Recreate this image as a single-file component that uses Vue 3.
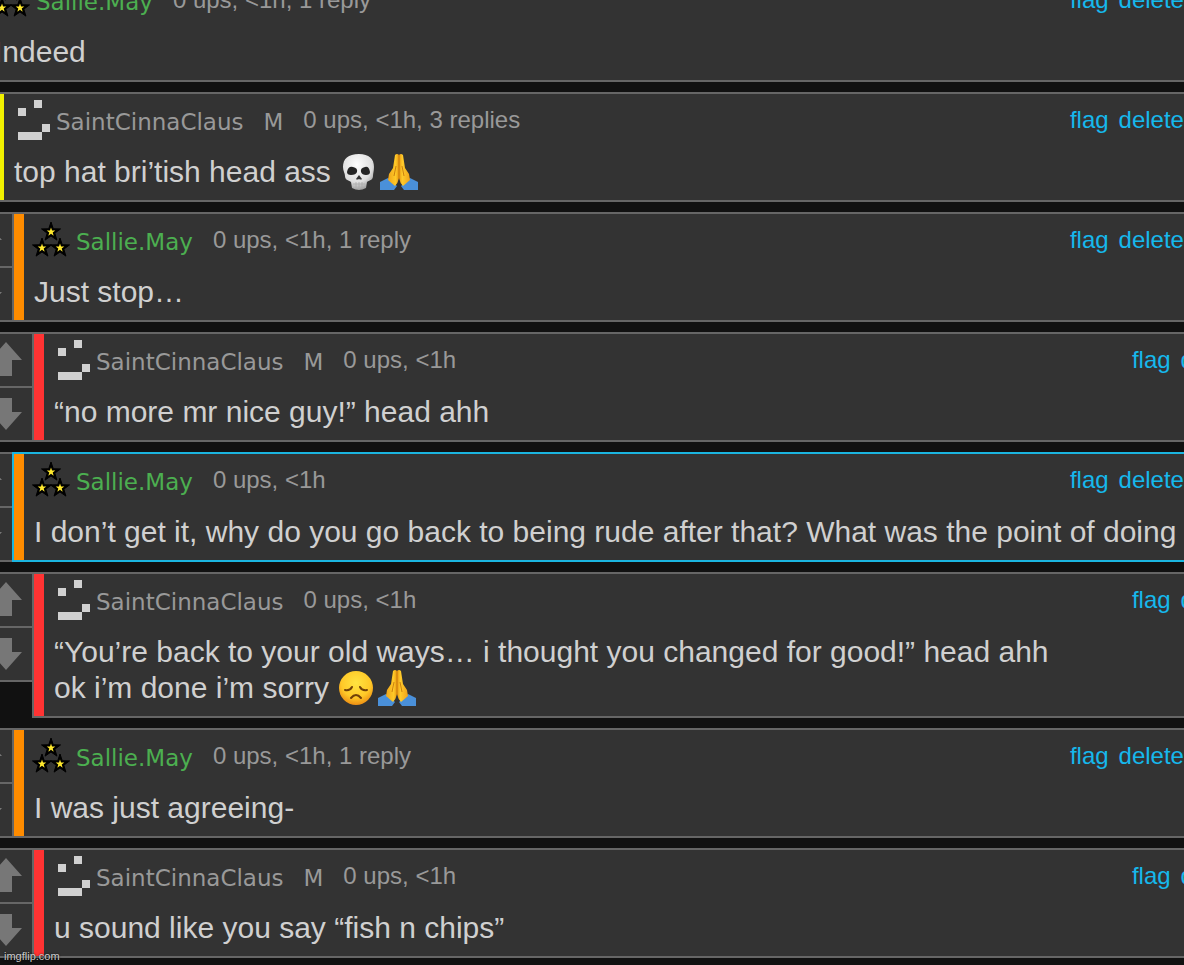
<template>
  <main class="page">
    <ul class="comments">
      <li
        v-for="comment in comments"
        :key="comment.id"
        class="row"
        :style="{ paddingLeft: comment.level * indent + 'px' }"
      >
        <div class="votes">
          <button type="button" class="vote" aria-label="Upvote">
            <svg width="32" height="36" viewBox="0 0 32 36">
              <path d="M16 0 L32 18 H22 V34 H10 V18 H0 Z" />
            </svg>
          </button>
          <button type="button" class="vote" aria-label="Downvote">
            <svg width="32" height="32" viewBox="0 0 32 32">
              <path d="M16 32 L32 14 H22 V0 H10 V14 H0 Z" />
            </svg>
          </button>
        </div>
        <article
          class="comment"
          :class="['level-' + comment.level, { highlighted: comment.highlighted }]"
        >
          <header class="comment-header">
            <svg v-if="comment.user === 'Sallie.May'" class="rank" viewBox="0 0 40 40">
              <g v-for="star in stars" :key="star" :transform="star">
                <path class="star-outer" :d="starPath" />
                <path class="star-inner" :d="starPath" transform="scale(0.45)" />
              </g>
            </svg>
            <svg v-else class="rank" viewBox="0 0 40 40" shape-rendering="crispEdges">
              <path class="pixels" d="M20 2h8v8h-8z M4 10h8v8h-8z M28 26h8v8h-8z M4 34h24v8h-24z" />
            </svg>
            <a href="#" class="user" :class="{ green: comment.user === 'Sallie.May' }">{{ comment.user }}</a>
            <span v-if="comment.mod" class="mod">M</span>
            <span class="meta">{{ comment.meta }}</span>
            <nav class="actions">
              <a href="#">flag</a>
              <a href="#">delete</a>
              <a v-if="comment.level < 3" href="#">reply</a>
            </nav>
          </header>
          <div class="comment-body">
            <p v-for="(line, index) in comment.lines" :key="index">
              <span>{{ line.text }}</span>
              <template v-for="emoji in line.emojis" :key="emoji">
                <svg v-if="emoji === 'skull'" class="emoji" viewBox="0 0 40 36" role="img" aria-label="skull">
                  <defs>
                    <radialGradient id="bone" cx="0.45" cy="0.3" r="0.75">
                      <stop offset="0" stop-color="#fff" />
                      <stop offset="0.65" stop-color="#dedede" />
                      <stop offset="1" stop-color="#909090" />
                    </radialGradient>
                  </defs>
                  <path
                    d="M20 0 C9 0 4 5 4 13 C4 17 6 19 6 22 C6 26 9 26 12 28 L13 34 Q20 38 27 34 L28 28 C31 26 34 26 34 22 C34 19 35 17 35 13 C35 5 30 0 20 0 Z"
                    fill="url(#bone)"
                  />
                  <path
                    d="M8 18 Q9 12 14 13 Q19 14 18 18 Q17 21 12 21 Q8 21 8 18 Z M31 18 Q30 12 26 13 Q21 14 22 18 Q23 21 27 21 Q31 21 31 18 Z"
                    fill="#252525"
                  />
                  <path d="M20 21 L17 25 Q18 26 20 25 Q22 26 23 25 Z" fill="#333" />
                  <path d="M14 30 H26 M17 28 V34 M20 28 V35 M23 28 V34" stroke="#aaa" stroke-width="0.8" />
                </svg>
                <svg v-else-if="emoji === 'pray'" class="emoji" viewBox="0 0 40 36" role="img" aria-label="folded hands">
                  <defs>
                    <linearGradient id="skin" x1="0" y1="0" x2="1" y2="0">
                      <stop offset="0" stop-color="#f0a51a" />
                      <stop offset="0.35" stop-color="#ffca28" />
                      <stop offset="0.5" stop-color="#e89612" />
                      <stop offset="0.65" stop-color="#ffcb2b" />
                      <stop offset="1" stop-color="#efa21a" />
                    </linearGradient>
                  </defs>
                  <path d="M1 28 L9 24 L18 32 L15 36 H1 Z M39 28 L31 24 L22 32 L25 36 H39 Z" fill="#4a90d9" />
                  <path
                    d="M16 1 Q18 -1 20 1 Q22 -1 24 1 L26 14 L30 20 L31 26 L24 32 Q21 29 20 24 Q19 29 16 32 L9 26 L10 20 L14 14 Z"
                    fill="url(#skin)"
                  />
                  <path d="M20 1 V25 M17 12 L15 22 M23 12 L25 22" fill="none" stroke="#c5780c" stroke-width="0.9" />
                </svg>
                <svg v-else class="emoji" viewBox="0 0 40 36" role="img" aria-label="disappointed face">
                  <defs>
                    <radialGradient id="face" cx="0.5" cy="0.35" r="0.65">
                      <stop offset="0" stop-color="#ffe341" />
                      <stop offset="0.65" stop-color="#ffc928" />
                      <stop offset="1" stop-color="#ed8f14" />
                    </radialGradient>
                  </defs>
                  <circle cx="19" cy="18" r="17" fill="url(#face)" />
                  <path
                    d="M14 28 Q19 22 24 28 M8 20 Q13 21 15 17 M23 17 Q25 21 30 20"
                    fill="none"
                    stroke="#704008"
                    stroke-width="2"
                    stroke-linecap="round"
                  />
                </svg>
              </template>
            </p>
          </div>
        </article>
      </li>
    </ul>
    <span class="watermark">imgflip.com</span>
  </main>
</template>

<script setup>
const indent = 20;

const starPath =
  'M0 -10 L2.3 -3.2 L9.5 -3.1 L3.8 1.2 L5.9 8.1 L0 4 L-5.9 8.1 L-3.8 1.2 L-9.5 -3.1 L-2.3 -3.2 Z';
const stars = ['translate(17 14)', 'translate(8 30)', 'translate(26 30)'];

const comments = [
  {
    id: 1,
    level: 0,
    user: 'Sallie.May',
    meta: '0 ups, <1h, 1 reply',
    lines: [{ text: 'Indeed' }]
  },
  {
    id: 2,
    level: 1,
    user: 'SaintCinnaClaus',
    mod: true,
    meta: '0 ups, <1h, 3 replies',
    lines: [{ text: 'top hat bri’tish head ass ', emojis: ['skull', 'pray'] }]
  },
  {
    id: 3,
    level: 2,
    user: 'Sallie.May',
    meta: '0 ups, <1h, 1 reply',
    lines: [{ text: 'Just stop…' }]
  },
  {
    id: 4,
    level: 3,
    user: 'SaintCinnaClaus',
    mod: true,
    meta: '0 ups, <1h',
    lines: [{ text: '“no more mr nice guy!” head ahh' }]
  },
  {
    id: 5,
    level: 2,
    user: 'Sallie.May',
    meta: '0 ups, <1h',
    highlighted: true,
    lines: [{ text: 'I don’t get it, why do you go back to being rude after that? What was the point of doing' }]
  },
  {
    id: 6,
    level: 3,
    user: 'SaintCinnaClaus',
    meta: '0 ups, <1h',
    lines: [
      { text: '“You’re back to your old ways… i thought you changed for good!” head ahh' },
      { text: 'ok i’m done i’m sorry ', emojis: ['sad', 'pray'] }
    ]
  },
  {
    id: 7,
    level: 2,
    user: 'Sallie.May',
    meta: '0 ups, <1h, 1 reply',
    lines: [{ text: 'I was just agreeing-' }]
  },
  {
    id: 8,
    level: 3,
    user: 'SaintCinnaClaus',
    mod: true,
    meta: '0 ups, <1h',
    lines: [{ text: 'u sound like you say “fish n chips”' }]
  }
];
</script>

<style>
body {
  margin: 0;
  background: #111;
}
</style>

<style scoped>
.page {
  position: relative;
  min-height: 100vh;
  overflow: hidden;
  background: #111;
  color: #d0d0d0;
  font-family: "Liberation Sans", Arial, sans-serif;
}
/* the thread is wider than the window and is cut at its edges */
.comments {
  display: flex;
  flex-direction: column;
  gap: 10px;
  margin: -28px -74px 0 -82px;
  padding: 0 0 7px;
  list-style: none;
}
.row {
  display: flex;
  align-items: flex-start;
}
.votes {
  flex: none;
  box-sizing: border-box;
  width: 54px;
  border: 2px solid #666;
  border-right: 0;
  background: #333;
}
.vote {
  display: block;
  box-sizing: content-box;
  width: 100%;
  height: 52px;
  padding: 0;
  border: 0;
  background: none;
}
.vote + .vote {
  border-top: 2px solid #666;
}
.vote svg {
  display: block;
  margin: 0 auto;
  fill: #777;
}
.comment {
  flex: 1;
  min-width: 0;
  padding: 0 10px 10px 20px;
  border: 2px solid #666;
  background: linear-gradient(to right, var(--bar) 10px, #333 10px);
  background-origin: padding-box;
  background-clip: padding-box;
}
.level-0 {
  --bar: #66cc33;
}
.level-1 {
  --bar: #f0f000;
}
.level-2 {
  --bar: #ff8c00;
}
.level-3 {
  --bar: #ff3333;
}
.highlighted {
  border-color: #1bb5e0;
}
.comment-header {
  display: flex;
  align-items: center;
  height: 52px;
  margin-bottom: 8px;
  color: #999;
  font-size: 24px;
  line-height: 28px;
  white-space: nowrap;
}
.rank {
  flex: none;
  width: 40px;
  height: 40px;
  margin: -4px 2px 0 0;
  overflow: visible;
}
.star-outer {
  fill: #000;
  stroke: #000;
  stroke-width: 1;
}
.star-inner {
  fill: #ffe92e;
}
.pixels {
  fill: #d0d0d0;
}
.user,
.mod {
  margin-right: 20px;
  padding-top: 4px;
  color: #999;
  font-family: Verdana, "DejaVu Sans", sans-serif;
  font-size: 23px;
  text-decoration: none;
}
.green {
  color: #4caf50;
}
.actions {
  display: flex;
  gap: 10px;
  margin-left: auto;
}
.actions a {
  color: #16b8ec;
  text-decoration: none;
}
.comment-body {
  font-size: 30px;
  line-height: 36px;
}
.comment-body p {
  display: flex;
  margin: 0;
  white-space: pre;
}
.emoji {
  flex: none;
  width: 40px;
  height: 36px;
}
.watermark {
  position: absolute;
  bottom: 2px;
  left: 4px;
  color: #ccc;
  font-size: 11px;
  line-height: 13px;
  text-shadow: 0 0 2px #000;
}
</style>
